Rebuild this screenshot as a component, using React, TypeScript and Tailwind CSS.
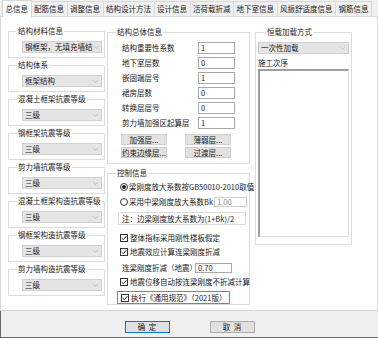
import { ChevronDown } from 'lucide-react';
import type { ReactNode } from 'react';

const tabs = ['总信息', '配筋信息', '调整信息', '结构设计方法', '设计信息', '活荷载折减', '地下室信息', '风振舒适度信息', '钢筋信息'];

const seismicGroups = [
  ['结构材料信息', '钢框架，无填充墙结'],
  ['结构体系', '框架结构'],
  ['混凝土框架抗震等级', '三级'],
  ['钢框架抗震等级', '三级'],
  ['剪力墙抗震等级', '三级'],
  ['混凝土框架构造抗震等级', '三级'],
  ['钢框架构造抗震等级', '三级'],
  ['剪力墙构造抗震等级', '三级'],
];

const totalRows = [
  ['结构重要性系数', '1'],
  ['地下室层数', '0'],
  ['嵌固端层号', '1'],
  ['裙房层数', '0'],
  ['转换层层号', '0'],
  ['剪力墙加强区起算层', '1'],
];

function Group({ title, className, children }: { title: string; className?: string; children: ReactNode }) {
  return (
    <fieldset className={'min-w-0 border border-[#dcdcdc] ' + (className ?? '')}>
      <legend className="ml-[8px] px-[1px] leading-[10px]">{title}</legend>
      {children}
    </fieldset>
  );
}

function Select({ value, className }: { value: string; className?: string }) {
  return (
    <div className={'flex items-center h-[12px] bg-[#e5e5e5] border border-[#d0d0d0] pl-[2px] pr-[2px] ' + (className ?? '')}>
      <span className="flex-1 whitespace-nowrap leading-[10px]">{value}</span>
      <ChevronDown size={7} strokeWidth={1.5} className="text-[#8a8a8a] shrink-0" />
    </div>
  );
}

function TextBox({ value, className, muted }: { value: string; className?: string; muted?: boolean }) {
  return (
    <div className={'flex items-center bg-white border border-[#a9a9a9] pl-[2px] leading-[10px] ' + (muted ? 'text-[#8a8a8a] border-[#cccccc] ' : '') + (className ?? '')}>
      {value}
    </div>
  );
}

function Check({ label }: { label: string }) {
  return (
    <div className="flex items-center h-[10px] whitespace-nowrap">
      <span className="w-[8px] h-[8px] border border-[#333333] bg-white flex items-center justify-center shrink-0">
        <svg width="6" height="6" viewBox="0 0 6 6">
          <path d="M0.6 3 L2.3 4.7 L5.4 1.2" fill="none" stroke="#222222" strokeWidth="1" />
        </svg>
      </span>
      <span className="ml-[2px] leading-[10px]">{label}</span>
    </div>
  );
}

function Radio({ label, checked }: { label: string; checked?: boolean }) {
  return (
    <div className="flex items-center">
      <span className="w-[8px] h-[8px] rounded-full border border-[#333333] bg-white flex items-center justify-center shrink-0">
        {checked && <span className="w-[4px] h-[4px] rounded-full bg-[#222222]" />}
      </span>
      <span className="ml-[1px] leading-[10px] whitespace-nowrap">{label}</span>
    </div>
  );
}

function Button({ label, className }: { label: string; className?: string }) {
  return (
    <div className={'flex items-center justify-center bg-[#e1e1e1] border border-[#d0d0d0] whitespace-nowrap leading-[9px] ' + (className ?? '')}>
      {label}
    </div>
  );
}

export default function App() {
  return (
    <div className="w-[378px] h-[338px] flex flex-col bg-[#f0f0f0] text-[7.5px] text-[#1a1a1a] font-['Noto_Sans_CJK_SC','Noto_Sans',sans-serif] overflow-hidden">
      {/* 页签 */}
      <div className="flex h-[17px] pl-[2px] border-b border-[#d9d9d9] shrink-0">
        {tabs.map((t, i) => (
          <div
            key={t}
            className={
              i === 0
                ? 'flex items-center px-[2.5px] bg-white border-l border-r border-t border-[#d9d9d9] -mb-[1px] whitespace-nowrap'
                : 'flex items-center px-[2.5px] bg-[#f0f0f0] border-r border-t border-[#d9d9d9] mt-[1px] whitespace-nowrap'
            }
          >
            {t}
          </div>
        ))}
      </div>

      {/* 页面 */}
      <div className="flex items-start h-[294px] bg-white border-l border-r border-b border-[#d9d9d9] pl-[7px] pt-[9px] shrink-0">
        <div className="flex flex-col gap-[2px] w-[97px]">
          {seismicGroups.map(([title, value]) => (
            <Group key={title} title={title} className="pb-[4px]">
              <Select value={value} className="mt-[5px] ml-[13px] mr-[2px]" />
            </Group>
          ))}
        </div>

        <div className="flex flex-col ml-[2px] mt-[1px] w-[143px]">
          <Group title="结构总体信息" className="pb-[5px]">
            <div className="flex flex-col gap-[3px] mt-[5px] pl-[14px]">
              {totalRows.map(([label, value]) => (
                <div key={label} className="flex items-center h-[12px]">
                  <span className="w-[76px] whitespace-nowrap leading-[10px]">{label}</span>
                  <TextBox value={value} className="w-[37px] h-[12px]" />
                </div>
              ))}
            </div>
            <div className="grid grid-cols-[46px_46px] gap-x-[18px] gap-y-[2px] mt-[5px] pl-[13px]">
              <Button label="加强层..." className="h-[11px]" />
              <Button label="薄弱层..." className="h-[11px]" />
              <Button label="约束边缘层..." className="h-[11px]" />
              <Button label="过渡层..." className="h-[11px]" />
            </div>
          </Group>

          <Group title="控制信息" className="mt-[4px]">
            <div className="flex flex-col pl-[12px] pr-[2px]">
              <div className="mt-[4px] h-[10px] whitespace-nowrap">
                <Radio label="梁刚度放大系数按GB50010-2010取值" checked />
              </div>
              <div className="flex items-center justify-between mt-[5px] h-[10px]">
                <Radio label="采用中梁刚度放大系数Bk" />
                <TextBox value="1.00" muted className="w-[33px] h-[10px]" />
              </div>
              <div className="flex items-center mt-[5px] h-[13px] ml-[-2px] mr-[1px] border border-[#dcdcdc] pl-[3px] whitespace-nowrap leading-[10px]">
                注：边梁刚度放大系数为(1+Bk)/2
              </div>
              <div className="mt-[8px]">
                <Check label="整体指标采用刚性楼板假定" />
              </div>
              <div className="mt-[4px]">
                <Check label="地震效应计算连梁刚度折减" />
              </div>
              <div className="flex items-center mt-[6px] h-[10px] pl-[2px]">
                <span className="w-[73px] whitespace-nowrap leading-[10px]">连梁刚度折减（地震）</span>
                <TextBox value="0.70" className="w-[37px] h-[10px]" />
              </div>
              <div className="mt-[4px]">
                <Check label="地震位移自动按连梁刚度不折减计算" />
              </div>
            </div>
            <div className="flex items-center mt-[4px] ml-[9px] w-[113px] h-[13px] border border-[#e05a6a] pl-[3px]">
              <Check label="执行《通用规范》（2021版）" />
            </div>
          </Group>
        </div>

        <Group title="恒载加载方式" className="ml-[5px] mt-[1px] w-[97px] px-[2px] pb-[7px]">
          <Select value="一次性加载" className="mt-[5px] h-[11px]" />
          <div className="mt-[4px] leading-[10px]">施工次序</div>
          <div className="mt-[1px] h-[168px] bg-white border-l-2 border-t-2 border-r border-b border-l-[#a0a0a0] border-t-[#a0a0a0] border-r-[#e3e3e3] border-b-[#e3e3e3]" />
        </Group>
      </div>

      {/* 底部按钮 */}
      <div className="flex-1 flex justify-center gap-[40px] pt-[10px] border-l border-b border-[#6b6b6b]">
        <div className="flex items-center justify-center w-[45px] h-[12px] bg-[#e1e1e1] border border-[#0078d7] whitespace-pre leading-[10px]">
          确  定
        </div>
        <div className="flex items-center justify-center w-[45px] h-[12px] bg-[#e1e1e1] border border-[#adadad] whitespace-pre leading-[10px]">
          取  消
        </div>
      </div>
    </div>
  );
}
